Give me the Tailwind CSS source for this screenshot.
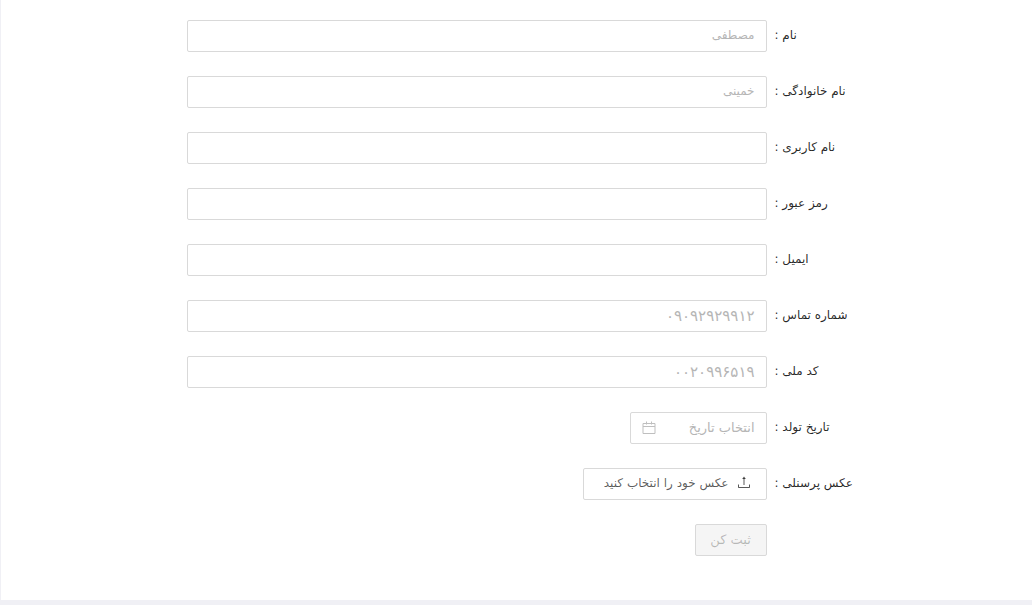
<!DOCTYPE html>
<html lang="fa" dir="rtl">
<head>
<meta charset="utf-8">
<meta name="viewport" content="width=device-width, initial-scale=1">
<title>ثبت اطلاعات</title>
<script src="https://cdn.jsdelivr.net/npm/@tailwindcss/browser@4"></script>
</head>
<body class="min-h-screen bg-[#f0f0f5] pb-[5px] pl-px font-['DejaVu_Sans',sans-serif] text-xs text-black/85">
<main class="bg-white pt-5 pr-[17px] pb-11 pl-5">
<form class="grid gap-6">
<div class="grid grid-cols-[6fr_14fr_4fr] items-center">
<label for="first" class="pb-0.5 pl-2 text-left">نام :</label>
<input id="first" type="text" placeholder="مصطفی" class="h-8 w-full rounded-xs border border-[#d9d9d9] px-[11px] pb-0.5 text-xs outline-none placeholder:text-[#b5b5b5]">
</div>
<div class="grid grid-cols-[6fr_14fr_4fr] items-center">
<label for="last" class="pb-0.5 pl-2 text-left">نام خانوادگی :</label>
<input id="last" type="text" placeholder="خمینی" class="h-8 w-full rounded-xs border border-[#d9d9d9] px-[11px] pb-0.5 text-xs outline-none placeholder:text-[#b5b5b5]">
</div>
<div class="grid grid-cols-[6fr_14fr_4fr] items-center">
<label for="user" class="pb-0.5 pl-2 text-left">نام کاربری :</label>
<input id="user" type="text" class="h-8 w-full rounded-xs border border-[#d9d9d9] px-[11px] text-xs outline-none">
</div>
<div class="grid grid-cols-[6fr_14fr_4fr] items-center">
<label for="pass" class="pb-0.5 pl-2 text-left">رمز عبور :</label>
<input id="pass" type="password" class="h-8 w-full rounded-xs border border-[#d9d9d9] px-[11px] text-xs outline-none">
</div>
<div class="grid grid-cols-[6fr_14fr_4fr] items-center">
<label for="email" class="pb-0.5 pl-2 text-left">ایمیل :</label>
<input id="email" type="email" class="h-8 w-full rounded-xs border border-[#d9d9d9] px-[11px] text-xs outline-none">
</div>
<div class="grid grid-cols-[6fr_14fr_4fr] items-center">
<label for="phone" class="pb-0.5 pl-2 text-left">شماره تماس :</label>
<input id="phone" type="text" placeholder="۰۹۰۹۲۹۲۹۹۱۲" class="h-8 w-full rounded-xs border border-[#d9d9d9] px-[11px] text-[15px] outline-none placeholder:text-[#b5b5b5]">
</div>
<div class="grid grid-cols-[6fr_14fr_4fr] items-center">
<label for="code" class="pb-0.5 pl-2 text-left">کد ملی :</label>
<input id="code" type="text" placeholder="۰۰۲۰۹۹۶۵۱۹" class="h-8 w-full rounded-xs border border-[#d9d9d9] px-[11px] text-[15px] outline-none placeholder:text-[#b5b5b5]">
</div>
<div class="grid grid-cols-[6fr_14fr_4fr] items-center">
<label for="birth" class="pb-0.5 pl-2 text-left">تاریخ تولد :</label>
<div class="flex h-8 w-[137px] items-center rounded-xs border border-[#d9d9d9] px-[11px]">
<input id="birth" type="text" placeholder="انتخاب تاریخ" class="w-full min-w-0 flex-1 text-[13px] outline-none placeholder:text-[#b5b5b5]">
<svg class="size-3.5 shrink-0 text-[#bfbfbf]" viewBox="0 0 14 14" fill="none" stroke="currentColor" aria-hidden="true"><path d="M1 2.500h12v10H1zM1 5.500h12M4.500 .5v3M9.500 .5v3"/></svg>
</div>
</div>
<div class="grid grid-cols-[6fr_14fr_4fr] items-center">
<label for="photo" class="pb-0.5 pl-2 text-left">عکس پرسنلی :</label>
<button id="photo" type="button" class="flex h-8 w-46 items-center gap-2 justify-self-start rounded-xs border border-[#d9d9d9] px-[15px] pb-0.5 whitespace-nowrap text-black/65">
<svg class="size-3.5 shrink-0" viewBox="0 0 14 14" fill="none" stroke="currentColor" aria-hidden="true"><path d="M1.500 8.500v3h11v-3M7 9V2"/><path d="M7 .5l1.900 2.500H5.100z" fill="currentColor" stroke="none"/></svg>
<span>عکس خود را انتخاب کنید</span>
</button>
</div>
<div class="grid grid-cols-[6fr_14fr_4fr] items-center">
<button type="submit" disabled class="col-start-2 h-8 w-18 justify-self-start rounded-xs border border-[#d9d9d9] bg-[#f5f5f5] text-center text-[13px] text-black/25">ثبت کن</button>
</div>
</form>
</main>
</body>
</html>
